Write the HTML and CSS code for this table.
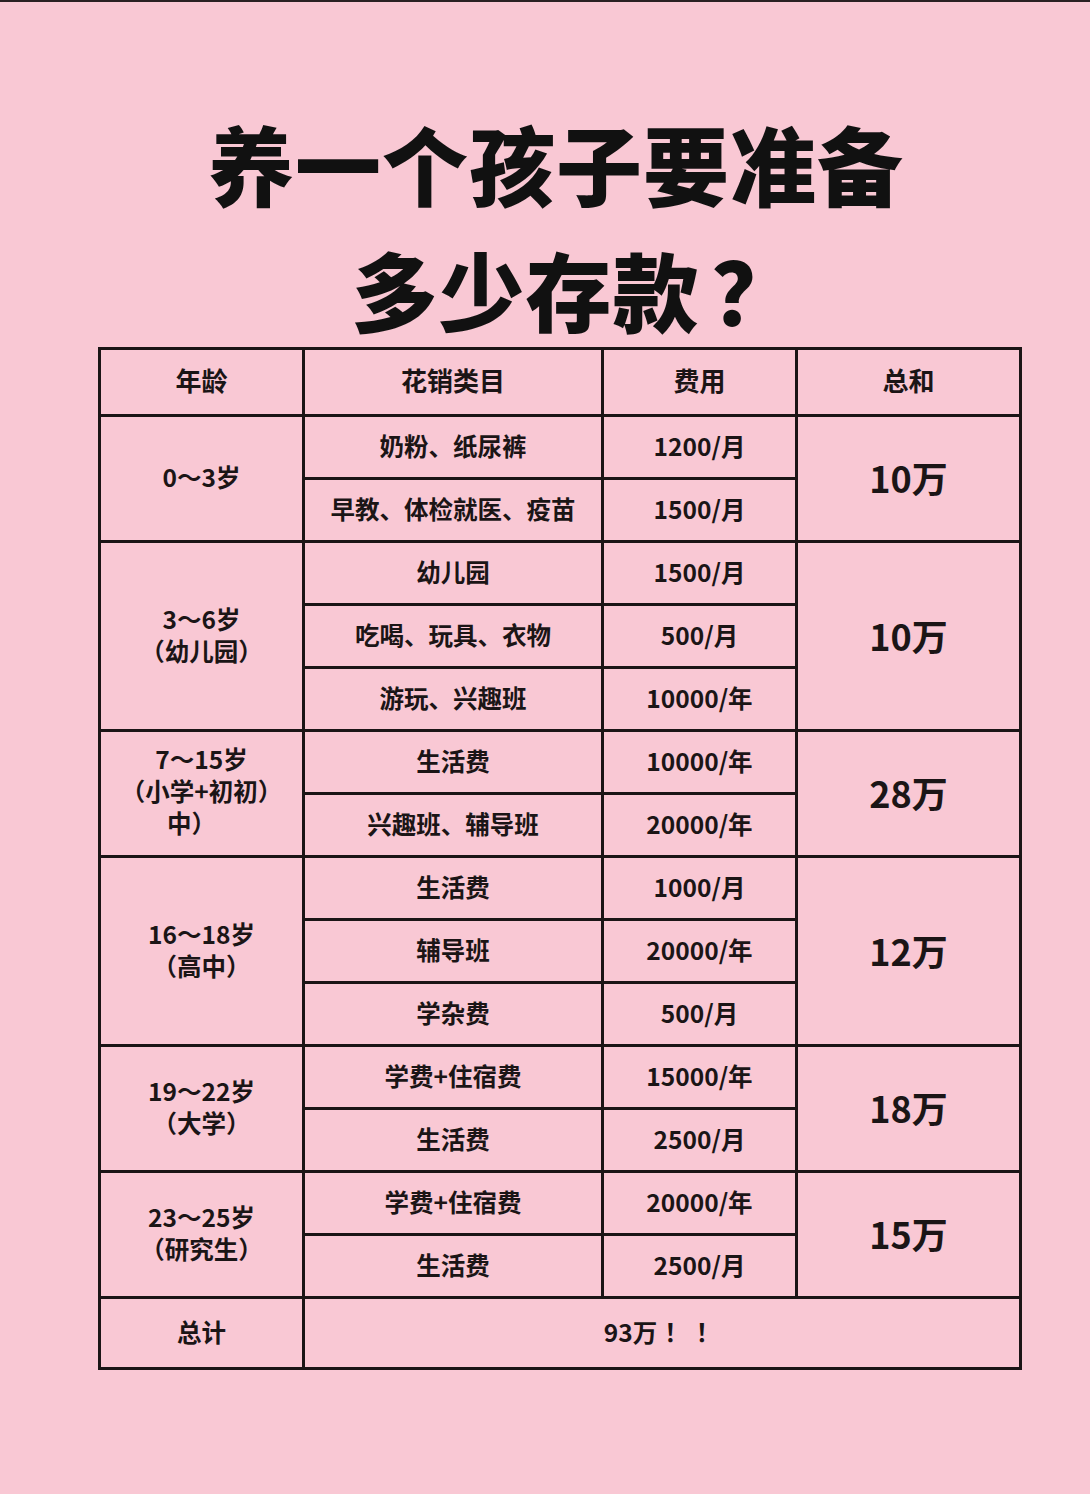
FILE: index.html
```html
<!DOCTYPE html>
<html lang="zh-CN">
<head>
<meta charset="utf-8">
<title>养一个孩子要准备多少存款？</title>
<link rel="stylesheet" href="styles.css">
</head>
<body>
<div class="page">
  <h1 class="title">
    <span class="line line1">养一个孩子要准备</span>
    <span class="line line2">多少存款<span class="q">？</span></span>
  </h1>
  <table class="cost">
    <colgroup>
      <col class="c-age"><col class="c-item"><col class="c-fee"><col class="c-sum">
    </colgroup>
    <thead>
      <tr class="head"><th>年龄</th><th>花销类目</th><th>费用</th><th>总和</th></tr>
    </thead>
    <tbody>
      <tr><td rowspan="2">0～3岁</td><td>奶粉、纸尿裤</td><td>1200/月</td><td rowspan="2" class="sum">10万</td></tr>
      <tr><td>早教、体检就医、疫苗</td><td>1500/月</td></tr>

      <tr><td rowspan="3">3～6岁<br>（幼儿园）</td><td>幼儿园</td><td>1500/月</td><td rowspan="3" class="sum">10万</td></tr>
      <tr><td>吃喝、玩具、衣物</td><td>500/月</td></tr>
      <tr><td>游玩、兴趣班</td><td>10000/年</td></tr>

      <tr><td rowspan="2" class="age3">7～15岁<br>（小学+初初）<br><span class="indent">中）</span></td><td>生活费</td><td>10000/年</td><td rowspan="2" class="sum">28万</td></tr>
      <tr><td>兴趣班、辅导班</td><td>20000/年</td></tr>

      <tr><td rowspan="3">16～18岁<br>（高中）</td><td>生活费</td><td>1000/月</td><td rowspan="3" class="sum">12万</td></tr>
      <tr><td>辅导班</td><td>20000/年</td></tr>
      <tr><td>学杂费</td><td>500/月</td></tr>

      <tr><td rowspan="2">19～22岁<br>（大学）</td><td>学费+住宿费</td><td>15000/年</td><td rowspan="2" class="sum">18万</td></tr>
      <tr><td>生活费</td><td>2500/月</td></tr>

      <tr><td rowspan="2">23～25岁<br>（研究生）</td><td>学费+住宿费</td><td>20000/年</td><td rowspan="2" class="sum">15万</td></tr>
      <tr><td>生活费</td><td>2500/月</td></tr>

      <tr class="total"><td>总计</td><td colspan="3" class="grand">93万<span class="bang">！</span><span class="bang">！</span></td></tr>
    </tbody>
  </table>
</div>
</body>
</html>
```

FILE: styles.css
```css
html, body {
  margin: 0;
  padding: 0;
}
body {
  background: #f9c8d4;
  font-family: "Noto Sans CJK SC", "Noto Sans", sans-serif;
  color: #1b1516;
  border-top: 2px solid #2a2022;
  min-height: 1492px;
}
.page {
  padding-top: 111px;
}
.title {
  margin: 0;
  display: flex;
  flex-direction: column;
  align-items: center;
  gap: 26px;
  font-size: 86px;
  font-weight: 900;
  line-height: 100px;
  letter-spacing: 1px;
  color: #111;
  height: 226px;
}
.line {
  display: block;
}
.line1 {
  padding-left: 22px;
}
.line2 {
  padding-left: 60px;
}
.q {
  margin-left: 12px;
}
.cost {
  margin: 8px 0 0 98px;
  width: 921px;
  border-collapse: collapse;
  table-layout: fixed;
  border: 3px solid #1b1516;
}
.c-age { width: 204px; }
.c-item { width: 299px; }
.c-fee { width: 194px; }
.c-sum { width: 224px; }
th, td {
  border: 3px solid #1b1516;
  text-align: center;
  vertical-align: middle;
  padding: 0 0 3px 0;
  font-weight: 700;
  font-size: 24.5px;
  line-height: 32px;
}
tbody tr {
  height: 63px;
}
tr.head {
  height: 67px;
}
th {
  font-size: 26px;
  padding-bottom: 5px;
}
td.sum {
  font-size: 36px;
}
td.age3 {
  padding-bottom: 5px;
}
.indent {
  margin-right: 20px;
}
tr.total {
  height: 71px;
}
td.grand {
  padding-right: 0;
}
.bang {
  margin-left: 7px;
}
```
